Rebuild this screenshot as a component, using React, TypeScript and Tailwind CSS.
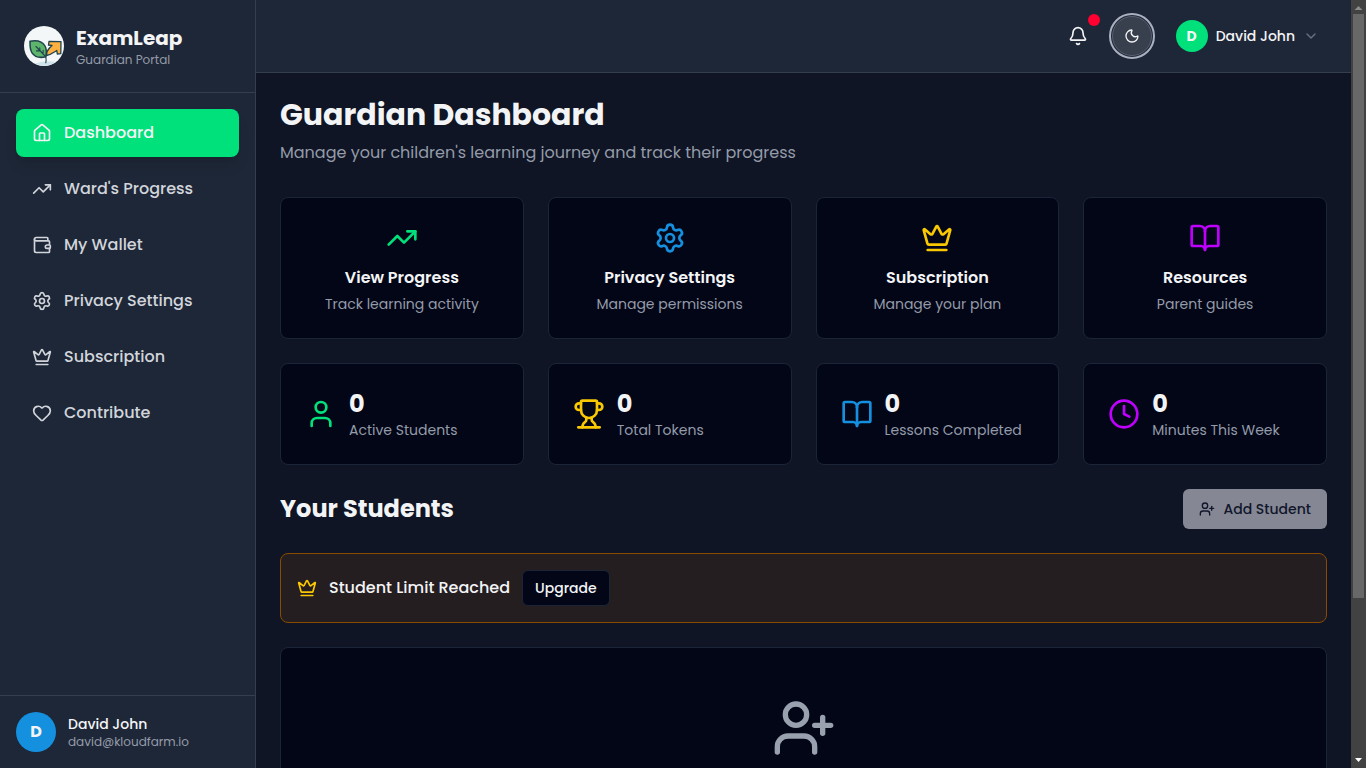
import React, { useState } from 'react';
import {
  Bell,
  BookOpen,
  ChevronDown,
  Clock,
  Crown,
  Heart,
  House,
  Moon,
  Settings,
  TrendingUp,
  Trophy,
  User,
  UserPlus,
  Wallet,
} from 'lucide-react';

const navItems = [
  { label: 'Dashboard', icon: House },
  { label: "Ward's Progress", icon: TrendingUp },
  { label: 'My Wallet', icon: Wallet },
  { label: 'Privacy Settings', icon: Settings },
  { label: 'Subscription', icon: Crown },
  { label: 'Contribute', icon: Heart },
];

const actions = [
  { title: 'View Progress', text: 'Track learning activity', icon: TrendingUp, color: 'text-[#00e07b]' },
  { title: 'Privacy Settings', text: 'Manage permissions', icon: Settings, color: 'text-[#1490df]' },
  { title: 'Subscription', text: 'Manage your plan', icon: Crown, color: 'text-[#fac800]' },
  { title: 'Resources', text: 'Parent guides', icon: BookOpen, color: 'text-[#bf00ff]' },
];

const stats = [
  { label: 'Active Students', value: 0, icon: User, color: 'text-[#00e07b]' },
  { label: 'Total Tokens', value: 0, icon: Trophy, color: 'text-[#fac800]' },
  { label: 'Lessons Completed', value: 0, icon: BookOpen, color: 'text-[#1490df]' },
  { label: 'Minutes This Week', value: 0, icon: Clock, color: 'text-[#bf00ff]' },
];

const Logo = () => (
  <svg viewBox="0 0 40 40" className="size-10 shrink-0" aria-hidden="true">
    <circle cx="20" cy="20" r="20" fill="#f3f7f8" />
    <path d="M11 37.5Q22 34 32 36A20 20 0 0 1 11 37.5Z" fill="#cfe3ea" />
    <path
      d="M22.500 29.500c0-3 1-5.500 3-7.500l2.500-2.500-3.500-.5.500-3.500 12 .2-.2 12-3.500.3-.5-3.500c-3 1.500-6 4.500-10.300 5z"
      fill="#fbb040"
      stroke="#20424f"
      strokeWidth="1.3"
      strokeLinejoin="round"
    />
    <path
      d="M6 15.200c6.500-1.200 12.500.3 15 4.800 1.800 3.300 1.500 7 .8 10.800-5.300 1.200-11 .2-13.800-4-2.300-3.500-2-8-2-11.600z"
      fill="#5cb56a"
      stroke="#20424f"
      strokeWidth="1.5"
      strokeLinejoin="round"
    />
    <path
      d="M12 20.500l9.800 10.300q.6 2.500 0 6M16 24.700l-.3-3M19 27.800l.2-3.500M16 24.700l-3.500.2"
      fill="none"
      stroke="#20424f"
      strokeWidth="1.1"
      strokeLinecap="round"
    />
  </svg>
);

const Sidebar = () => {
  const [active, setActive] = useState('Dashboard');

  return (
    <aside className="flex w-64 shrink-0 flex-col border-r border-[#353e4d] bg-[#1e2737]">
      <div className="flex items-center gap-3 border-b border-[#353e4d] p-6">
        <Logo />
        <div>
          <div className="text-xl font-bold">ExamLeap</div>
          <div className="text-xs text-[#949ba9]">Guardian Portal</div>
        </div>
      </div>

      <nav className="flex flex-1 flex-col gap-2 p-4">
        {navItems.map(({ label, icon: Icon }) => (
          <a
            key={label}
            href="#"
            onClick={() => setActive(label)}
            className={`flex items-center gap-3 rounded-lg px-4 py-3 font-medium ${
              active === label ? 'bg-[#00e07b] text-[#f3f4f6] shadow-lg' : 'text-[#d1d5db]'
            }`}
          >
            <Icon className="size-5" />
            {label}
          </a>
        ))}
      </nav>

      <div className="flex items-center gap-3 border-t border-[#353e4d] p-4">
        <div className="flex size-10 items-center justify-center rounded-full bg-[#1490df] font-bold">D</div>
        <div>
          <div className="text-sm font-medium">David John</div>
          <div className="text-xs text-[#949ba9]">david@kloudfarm.io</div>
        </div>
      </div>
    </aside>
  );
};

const Header = () => (
  <header className="flex items-center justify-end gap-4 border-b border-[#353e4d] bg-[#1e2737] px-6 py-4">
    <button aria-label="Notifications" className="relative p-2">
      <Bell className="size-5" />
      <span className="absolute -top-1 -right-1 size-3 rounded-full bg-[#ff0030]" />
    </button>
    <button
      aria-label="Toggle theme"
      className="flex size-10 items-center justify-center rounded-full border border-[#596070] bg-[#383f4d] outline-2 outline-offset-1 outline-[#a9b0bf]"
    >
      <Moon className="size-4" />
    </button>
    <button className="flex items-center gap-2 px-2">
      <span className="flex size-8 items-center justify-center rounded-full bg-[#00e07b] text-sm font-bold">D</span>
      <span className="text-sm font-medium">David John</span>
      <ChevronDown className="ml-0 size-4 text-[#6a7282]" />
    </button>
  </header>
);

const ScrollBar = () => (
  <div aria-hidden="true" className="flex w-[15px] shrink-0 flex-col items-center bg-[#424242]">
    <svg viewBox="0 0 15 14" className="h-[14px] w-full">
      <path d="M7.5 6L11.5 10H3.5Z" fill="#8b8b8b" />
    </svg>
    <div className="w-[11px] flex-[584] bg-[#686868]" />
    <div className="flex-[156]" />
    <svg viewBox="0 0 15 14" className="h-[14px] w-full">
      <path d="M4 4H11L7.5 8Z" fill="#ffffff" />
    </svg>
  </div>
);

const App = () => {
  return (
    <div className="flex h-screen overflow-hidden bg-[#0f1524] font-['Poppins','Inter',sans-serif] text-[#f3f4f6]">
      <Sidebar />

      <div className="min-w-0 flex-1 overflow-y-auto [scrollbar-width:none]">
        <Header />

        <main className="flex flex-col gap-6 p-6">
          <div className="mb-2">
            <h1 className="text-3xl font-bold">Guardian Dashboard</h1>
            <p className="mt-2 text-[#949ba9]">Manage your children's learning journey and track their progress</p>
          </div>

          <div className="grid grid-cols-4 gap-6">
            {actions.map(({ title, text, icon: Icon, color }) => (
              <a
                key={title}
                href="#"
                className="flex flex-col items-center rounded-lg border border-[#1c2537] bg-[#020617] p-6 text-center"
              >
                <Icon className={`mb-3 size-8 ${color}`} />
                <h3 className="font-semibold">{title}</h3>
                <p className="mt-1 text-sm text-[#949ba9]">{text}</p>
              </a>
            ))}
          </div>

          <div className="grid grid-cols-4 gap-6">
            {stats.map(({ label, value, icon: Icon, color }) => (
              <div
                key={label}
                className="flex items-center gap-3 rounded-lg border border-[#1c2537] bg-[#020617] p-6"
              >
                <Icon className={`size-8 shrink-0 ${color}`} />
                <div>
                  <p className="text-2xl font-bold">{value}</p>
                  <p className="text-sm text-[#949ba9]">{label}</p>
                </div>
              </div>
            ))}
          </div>

          <div className="flex items-center justify-between">
            <h2 className="text-2xl font-bold">Your Students</h2>
            <button
              disabled
              className="flex h-10 items-center gap-2 rounded-md bg-[#858894] px-4 text-sm font-medium text-[#11162b]"
            >
              <UserPlus className="size-4" />
              Add Student
            </button>
          </div>

          <div className="flex items-center gap-3 rounded-lg border border-[#894b00] bg-[#251e20] p-4">
            <Crown className="size-5 text-[#fac800]" />
            <span className="font-medium">Student Limit Reached</span>
            <button className="h-9 rounded-md border border-[#1c2537] bg-[#020617] px-3 text-sm font-medium">
              Upgrade
            </button>
          </div>

          <div className="flex min-h-75 justify-center rounded-lg border border-[#1c2537] bg-[#020617] p-12">
            <UserPlus className="size-16 text-[#99a1af]" />
          </div>
        </main>
      </div>

      <ScrollBar />
    </div>
  );
};

export default App;
